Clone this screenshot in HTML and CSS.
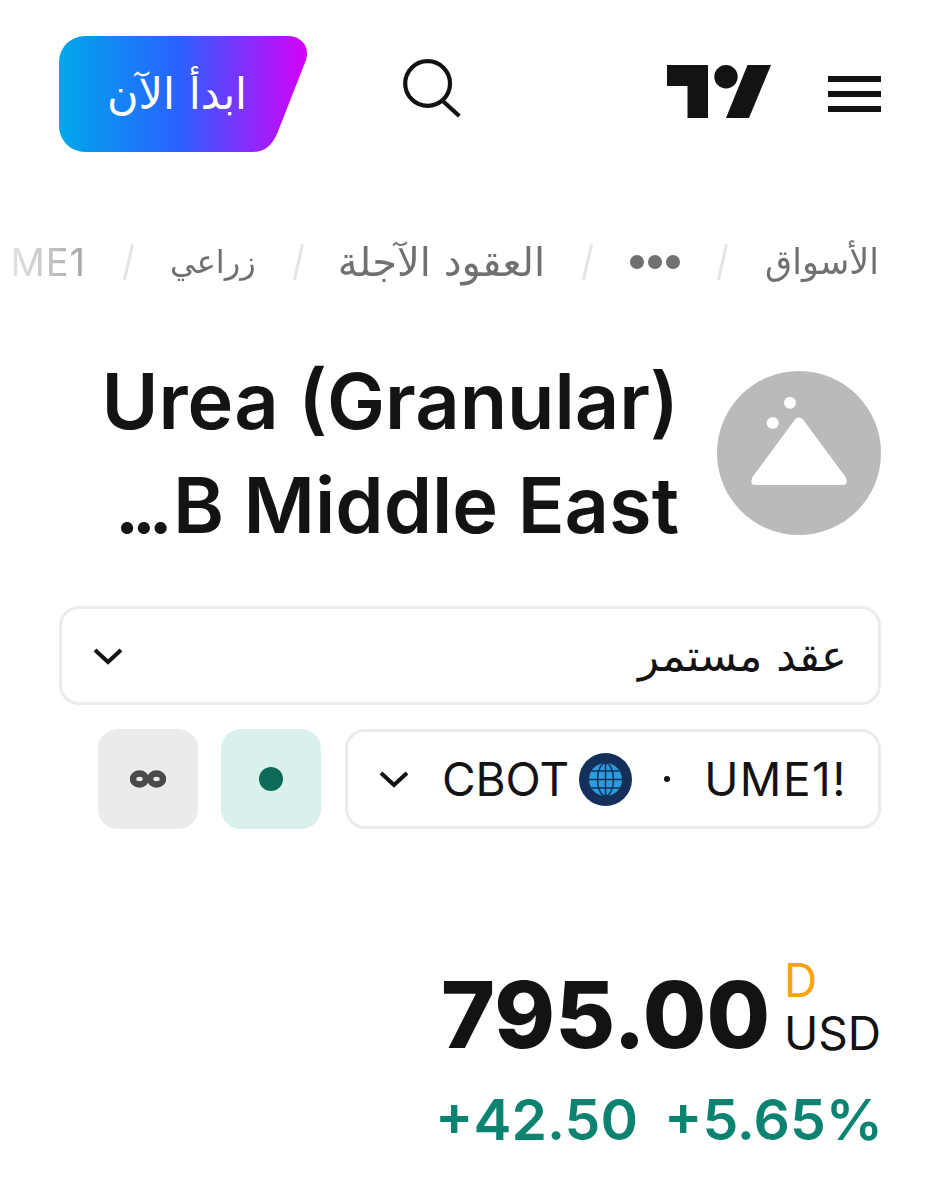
FILE: index.html
```html
<!DOCTYPE html>
<html lang="ar" dir="rtl">
<head>
    <meta charset="UTF-8">
    <meta name="viewport" content="width=device-width, initial-scale=1.0">
    <title>Urea (Granular) FOB Middle East</title>
    <link rel="stylesheet" href="styles.css">
</head>
<body>
    <!-- top bar -->
    <header class="top-bar">
        <svg class="menu-icon" viewBox="0 0 53 36" aria-label="menu">
            <rect x="0" y="0" width="53" height="6" />
            <rect x="0" y="15" width="53" height="6" />
            <rect x="0" y="30" width="53" height="6" />
        </svg>
        <svg class="brand-logo" viewBox="0 0 104 53" aria-label="TradingView">
            <polygon points="0,0 41,0 41,53 20.5,53 20.5,21 0,21" />
            <circle cx="59" cy="11.7" r="11.7" />
            <polygon points="80.5,0 104,0 82,53 59,53" />
        </svg>
        <svg class="search-icon" viewBox="0 0 58 58" aria-label="search">
            <circle cx="24.6" cy="24.5" r="22.4" />
            <line x1="38.7" y1="41" x2="56.3" y2="57" />
        </svg>
        <a href="#" class="start-button">ابدأ الآن</a>
    </header>

    <!-- breadcrumbs -->
    <nav class="crumbs">
        <a href="#">الأسواق</a>
        <span class="crumb-sep"></span>
        <span class="crumb-dots"><i></i><i></i><i></i></span>
        <span class="crumb-sep"></span>
        <a href="#" class="crumb-long">العقود الآجلة</a>
        <span class="crumb-sep"></span>
        <a href="#" class="crumb-short">زراعي</a>
        <span class="crumb-sep"></span>
        <a href="#" class="crumb-last">UME1!</a>
    </nav>

    <!-- symbol title -->
    <section class="symbol-head">
        <svg class="symbol-logo" viewBox="0 0 164 164">
            <circle cx="82" cy="82" r="82" fill="#bababa" />
            <circle cx="73" cy="31.7" r="6" fill="#fff" />
            <circle cx="55.7" cy="52" r="6" fill="#fff" />
            <path d="M78 48.5 Q82 44.5 86 48.5 L128.5 106 Q132 114 125 114 H39 Q32 114 35.5 106 Z" fill="#fff" />
        </svg>
        <h1 class="symbol-title" dir="ltr">
            <span>Urea (Granular)</span>
            <span><b>...</b>B Middle East</span>
        </h1>
    </section>

    <!-- contract select -->
    <div class="contract-select">
        <span>عقد مستمر</span>
        <svg class="chevron" viewBox="0 0 30 18"><polyline points="2,3 15,15 28,3" /></svg>
    </div>

    <!-- ticker row -->
    <div class="ticker-row">
        <div class="ticker-pill">
            <span class="ticker-name" dir="ltr">UME1!</span>
            <span class="ticker-dot"></span>
            <svg class="globe" viewBox="0 0 53 53">
                <circle cx="26.5" cy="26.5" r="26.5" fill="#14305a" />
                <circle cx="26.5" cy="26.5" r="16.5" fill="#2a9bdc" />
                <g fill="none" stroke="#14305a" stroke-width="1.5">
                    <ellipse cx="26.5" cy="26.5" rx="8" ry="16.5" />
                    <line x1="26.5" y1="10" x2="26.5" y2="43" />
                    <line x1="10" y1="26.5" x2="43" y2="26.5" />
                    <line x1="12.5" y1="18" x2="40.5" y2="18" />
                    <line x1="12.5" y1="35" x2="40.5" y2="35" />
                </g>
            </svg>
            <span class="ticker-exchange" dir="ltr">CBOT</span>
            <svg class="chevron" viewBox="0 0 30 18"><polyline points="2,3 15,15 28,3" /></svg>
        </div>
        <div class="status-box status-open"><span></span></div>
        <div class="status-box status-delay">
            <svg viewBox="0 0 36 18">
                <ellipse cx="9.5" cy="9" rx="6.5" ry="5.5" />
                <ellipse cx="26.5" cy="9" rx="6.5" ry="5.5" />
            </svg>
        </div>
    </div>

    <!-- price -->
    <section class="quote" dir="ltr">
        <div class="quote-main">
            <span class="price">795.00</span>
            <span class="price-side">
                <span class="price-flag">D</span>
                <span class="price-cur">USD</span>
            </span>
        </div>
        <div class="quote-change">
            <span>+42.50</span>
            <span>+5.65%</span>
        </div>
    </section>
</body>
</html>
```

FILE: styles.css
```css
/* base */
body {
    margin: 0;
    padding: 36px 59px 0;
    height: 1200px;
    box-sizing: border-box;
    overflow: hidden;
    background: #ffffff;
    color: #131313;
    font-family: Inter, "DejaVu Sans", sans-serif;
}

/* top bar */
.top-bar {
    display: flex;
    align-items: center;
    height: 116px;
}

.menu-icon {
    width: 53px;
    height: 36px;
    fill: #131313;
}

.brand-logo {
    width: 104px;
    height: 53px;
    margin-right: 57px;
    margin-top: -5px;
    fill: #131313;
}

.search-icon {
    width: 58px;
    height: 58px;
    margin-right: 206px;
    margin-top: -12px;
    fill: none;
    stroke: #111111;
    stroke-width: 4.2;
    overflow: visible;
}

.start-button {
    width: 248px;
    height: 116px;
    margin-right: auto;
    padding-right: 12px;
    box-sizing: border-box;
    display: flex;
    align-items: center;
    justify-content: center;
    color: #ffffff;
    font-family: "DejaVu Sans", sans-serif;
    font-size: 43px;
    text-decoration: none;
    background: linear-gradient(90deg, #00a8ea 0%, #2962ff 48%, #d500f9 100%);
    clip-path: path("M26 0 H228 C243 0 251 11 247 24 L218 98 C213 109 206 116 194 116 H26 A26 26 0 0 1 0 90 V26 A26 26 0 0 1 26 0 Z");
}

/* breadcrumbs */
.crumbs {
    display: flex;
    align-items: center;
    gap: 41px;
    height: 50px;
    margin: 85px 2px 0 -47px;
    overflow: hidden;
    white-space: nowrap;
    font-family: "DejaVu Sans", sans-serif;
    font-size: 35px;
    -webkit-mask-image: linear-gradient(90deg, rgba(0, 0, 0, 0.25), #000 12%);
    mask-image: linear-gradient(90deg, rgba(0, 0, 0, 0.25), #000 12%);
}

.crumbs a {
    color: #707070;
    text-decoration: none;
}

.crumbs .crumb-long {
    margin-left: -3px;
    font-size: 40px;
}

.crumbs .crumb-short {
    margin-left: -1px;
    font-size: 32px;
}

.crumb-sep {
    flex: none;
    width: 3px;
    height: 36px;
    background: #e4e4e4;
    transform: rotate(13deg);
}

.crumb-dots {
    display: flex;
    gap: 4px;
}

.crumb-dots i {
    width: 14px;
    height: 14px;
    border-radius: 50%;
    background: #707070;
}

.crumbs .crumb-last {
    flex: none;
    font-family: Inter, sans-serif;
    color: #8c8c8c;
    font-size: 38px;
    letter-spacing: 1px;
}

/* symbol title */
.symbol-head {
    display: flex;
    align-items: center;
    gap: 38px;
    margin-top: 62px;
}

.symbol-logo {
    flex: none;
    width: 164px;
    height: 164px;
}

.symbol-title {
    margin: 0;
    font-size: 77.5px;
    font-weight: 600;
    line-height: 104px;
    text-align: right;
}

.symbol-title span {
    display: block;
}

.symbol-title b {
    font-weight: 600;
    letter-spacing: -8px;
    margin-right: 8px;
}

/* contract select */
.contract-select {
    display: flex;
    align-items: center;
    justify-content: space-between;
    height: 99px;
    box-sizing: border-box;
    margin-top: 49px;
    padding: 0 31px;
    border: 3px solid #ebebeb;
    border-radius: 20px;
    font-family: "DejaVu Sans", sans-serif;
    font-size: 43.5px;
}

.chevron {
    flex: none;
    width: 30px;
    height: 18px;
    fill: none;
    stroke: #131313;
    stroke-width: 4;
}

/* ticker row */
.ticker-row {
    display: flex;
    gap: 24px;
    margin: 24px 0 0 39px;
    height: 100px;
}

.ticker-pill {
    flex: 1;
    display: flex;
    align-items: center;
    box-sizing: border-box;
    padding: 0 31px;
    border: 3px solid #ebebeb;
    border-radius: 20px;
    font-size: 46px;
}

.ticker-name {
    letter-spacing: 1.5px;
}

.ticker-dot {
    width: 6px;
    height: 6px;
    margin: 0 34px 0 32px;
    border-radius: 50%;
    background: #131313;
}

.globe {
    flex: none;
    width: 53px;
    height: 53px;
}

.ticker-exchange {
    margin-right: 10px;
}

.ticker-pill .chevron {
    margin-right: auto;
}

.status-box {
    flex: none;
    width: 100px;
    display: flex;
    align-items: center;
    justify-content: center;
    border-radius: 20px;
}

.status-open {
    background: #d9f0ec;
}

.status-open span {
    width: 24px;
    height: 24px;
    border-radius: 50%;
    background: #0b6b56;
}

.status-delay {
    margin-right: -1px;
    background: #ebebeb;
}

.status-delay svg {
    width: 36px;
    height: 18px;
    fill: none;
    stroke: #4a4a4a;
    stroke-width: 6.5;
}

/* price */
.quote {
    margin-top: 125px;
    display: flex;
    flex-direction: column;
    align-items: flex-end;
}

.quote-main {
    display: flex;
    align-items: flex-end;
    gap: 14px;
}

.price {
    font-size: 92px;
    font-weight: 800;
    line-height: 100px;
}

.price-side {
    display: flex;
    flex-direction: column;
    align-items: flex-start;
    margin-bottom: 5px;
    font-size: 46px;
    line-height: 53px;
}

.price-flag {
    color: #f7a30c;
}

.quote-change {
    display: flex;
    gap: 26px;
    margin: 20px -2px 0 0;
    color: #0c8370;
    font-size: 57px;
    font-weight: 600;
    line-height: 70px;
}
```
